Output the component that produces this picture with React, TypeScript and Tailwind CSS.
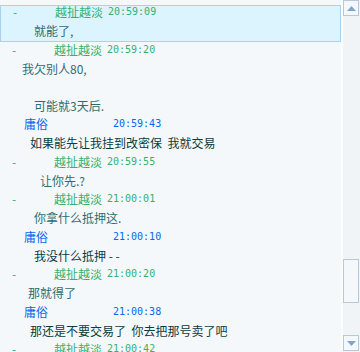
type Entry = {
  who: "me" | "them";
  time: string;
  lines: { text: string; indent: number }[];
};

const entries: Entry[] = [
  { who: "them", time: "20:59:20", lines: [{ text: "我欠别人80,", indent: 22 }, { text: "", indent: 0 }, { text: "可能就3天后.", indent: 34 }] },
  { who: "me", time: "20:59:43", lines: [{ text: "如果能先让我挂到改密保  我就交易", indent: 30 }] },
  { who: "them", time: "20:59:55", lines: [{ text: "让你先.?", indent: 40 }] },
  { who: "them", time: "21:00:01", lines: [{ text: "你拿什么抵押这.", indent: 34 }] },
  { who: "me", time: "21:00:10", lines: [{ text: "我没什么抵押 - -", indent: 34 }] },
  { who: "them", time: "21:00:20", lines: [{ text: "那就得了", indent: 28 }] },
  { who: "me", time: "21:00:38", lines: [{ text: "那还是不要交易了  你去把那号卖了吧", indent: 30 }] },
  { who: "them", time: "21:00:42", lines: [] },
];

const font = "font-['SimSun','Noto_Sans_CJK_SC',sans-serif] text-[12px]";

function Header({ who, time }: { who: Entry["who"]; time: string }) {
  if (who === "them") {
    return (
      <div className="flex h-[19px] items-start leading-[17px] whitespace-pre text-[#36b06e]">
        <span className="w-[54px] pl-[12px]">-</span>
        <span className="w-[53px]">越扯越淡</span>
        <span className="font-['DejaVu_Sans_Mono',monospace] text-[10px] tracking-[0px]">{time}</span>
      </div>
    );
  }
  return (
    <div className="flex h-[19px] items-start leading-[17px] whitespace-pre text-[#0a66ee]">
      <span className="w-[113px] pl-[24px]">庸俗</span>
      <span className="font-['DejaVu_Sans_Mono',monospace] text-[10px]">{time}</span>
    </div>
  );
}

function Line({ text, indent, who }: { text: string; indent: number; who: Entry["who"] }) {
  return (
    <div
      className={`h-[18.5px] leading-[18px] whitespace-pre ${who === "me" ? "text-[#0b3b3b]" : "text-[#2f6d6d]"}`}
      style={{ paddingLeft: indent }}
    >
      {text}
    </div>
  );
}

function Arrow({ down }: { down?: boolean }) {
  return (
    <svg width="9" height="5" viewBox="0 0 9 5" className={down ? "rotate-180" : ""}>
      <path d="M0 5h9L4.5 0z" fill="#7ea6cc" />
    </svg>
  );
}

export default function App() {
  return (
    <div className={`flex h-[352px] w-[360px] overflow-hidden bg-[#f4f8fb] ${font}`}>
      <div className="w-[341px] pt-[5px]">
        <div className="border border-[#a9d3ec] bg-[#dbf4fe] pb-[1px]">
          <div className="-mt-[3.5px]">
            <Header who="them" time="20:59:09" />
          </div>
          <Line who="them" text="就能了," indent={33} />
        </div>
        <div className="-mt-[1.5px]">
          {entries.map((e, i) => (
            <div key={i}>
              <Header who={e.who} time={e.time} />
              {e.lines.map((l, j) => (
                <Line key={j} who={e.who} text={l.text} indent={l.indent} />
              ))}
            </div>
          ))}
        </div>
      </div>
      <div className="w-[2px] bg-[#fbfcfd]" />
      <div className="flex w-[17px] flex-col bg-[#f1f4f7]">
        <div className="flex h-[16px] w-[16px] items-center justify-center border border-[#b8c8dc] bg-[#f5f8fb]">
          <Arrow />
        </div>
        <div className="h-[243px]" />
        <div className="h-[44px] w-[16px] border border-[#b8c8dc] bg-[#f5f8fb]" />
        <div className="h-[32px]" />
        <div className="flex h-[16px] w-[16px] items-center justify-center border border-[#b8c8dc] bg-[#f5f8fb]">
          <Arrow down />
        </div>
      </div>
    </div>
  );
}
